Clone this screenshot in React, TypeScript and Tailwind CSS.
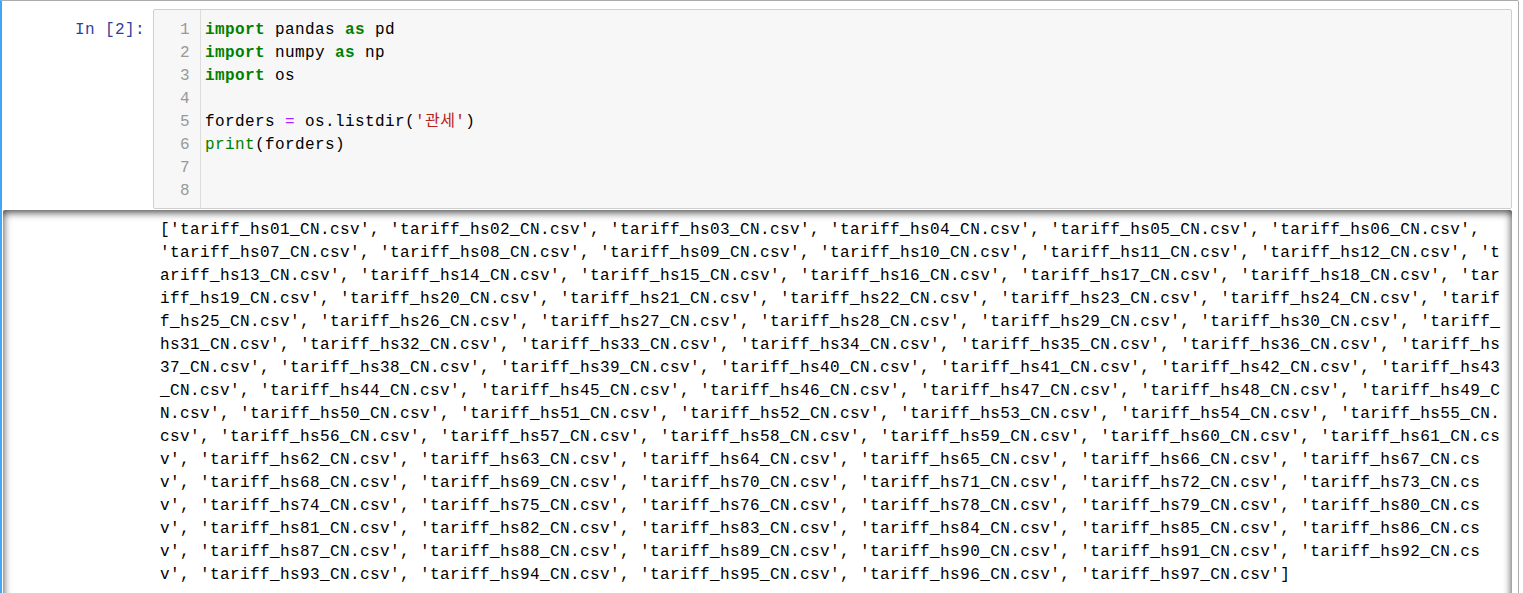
import React from "react";

const codeLines: React.ReactNode[] = [
  <>
    <span className="font-bold text-[#008000]">import</span> pandas{" "}
    <span className="font-bold text-[#008000]">as</span> pd
  </>,
  <>
    <span className="font-bold text-[#008000]">import</span> numpy{" "}
    <span className="font-bold text-[#008000]">as</span> np
  </>,
  <>
    <span className="font-bold text-[#008000]">import</span> os
  </>,
  "",
  <>
    forders <span className="text-[#aa22ff]">=</span> os.listdir(
    <span className="text-[#ba2121]">'관세'</span>)
  </>,
  <>
    <span className="text-[#008000]">print</span>(forders)
  </>,
  "",
  "",
];

// hs77 is reserved, so it never shows up in the folder
const files = Array.from({ length: 97 }, (_, i) => i + 1)
  .filter((n) => n !== 77)
  .map((n) => `'tariff_hs${String(n).padStart(2, "0")}_CN.csv'`);

const outputText = `[${files.join(", ")}]`;

const mono =
  "font-['Liberation_Mono','Noto_Sans_CJK_KR',monospace] text-[16px] tracking-[0.4px] leading-[23px]";

const App = () => {
  return (
    <div className="min-h-screen bg-white">
      <div className="w-[1519px] border border-[#ababab] border-l-2 border-l-[#42a5f5] rounded-tr-[2px] pt-2 pr-[6px] pb-6">
        <div className="flex">
          <div
            className={`w-[151px] shrink-0 pt-[10px] pr-2 text-right text-[#303f9f] ${mono}`}
          >
            In [2]:
          </div>
          <div className="flex flex-1 rounded-[2px] border border-[#cfcfcf] bg-[#f7f7f7]">
            <div
              className={`w-[47px] shrink-0 border-r border-[#dddddd] pt-[9px] pb-[5px] pr-[10px] text-right text-[#999999] ${mono}`}
            >
              {codeLines.map((_, i) => (
                <div key={i}>{i + 1}</div>
              ))}
            </div>
            <div className={`flex-1 pt-[9px] pb-[5px] pl-1 text-black ${mono}`}>
              {codeLines.map((line, i) => (
                <div key={i} className="h-[23px] whitespace-pre">
                  {line}
                </div>
              ))}
            </div>
          </div>
        </div>
        <div className="ml-px mt-px flex rounded-[2px] shadow-[inset_0_2px_8px_rgba(0,0,0,0.8)] pt-[9px] pb-6 pl-[157px] pr-[7px]">
          <pre
            className={`flex-1 whitespace-pre-wrap break-all text-black ${mono}`}
          >
            {outputText}
          </pre>
        </div>
      </div>
    </div>
  );
};

export default App;
